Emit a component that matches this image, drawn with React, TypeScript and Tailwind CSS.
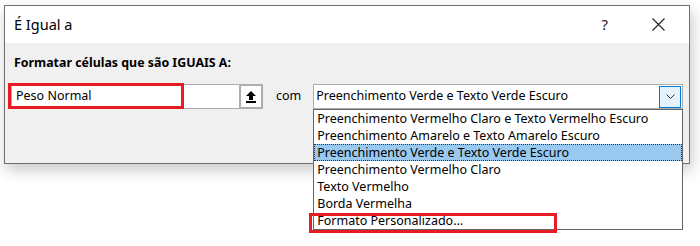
const items = [
  "Preenchimento Vermelho Claro e Texto Vermelho Escuro",
  "Preenchimento Amarelo e Texto Amarelo Escuro",
  "Preenchimento Verde e Texto Verde Escuro",
  "Preenchimento Vermelho Claro",
  "Texto Vermelho",
  "Borda Vermelha",
  "Formato Personalizado...",
];

const SELECTED = 2;

export default function App() {
  return (
    <div
      className="relative w-[700px] h-[246px] bg-white overflow-hidden text-black"
      style={{ fontFamily: '"Segoe UI", "Noto Sans", sans-serif' }}>
      {/* dialog */}
      <div className="ml-[4px] mt-[5px] w-[686px] h-[159px] border border-[#707070] bg-[#f0f0f0] flex flex-col shadow-[2px_6px_14px_rgba(0,0,0,0.22)]">
        {/* title bar */}
        <div className="h-[37px] bg-white flex items-center pl-[9px] pr-[24px] shrink-0">
          <span className="text-[14.5px] leading-none">É Igual a</span>
          <span className="ml-auto text-[15px] leading-none text-[#222]">?</span>
          <svg className="ml-[44px]" width="13" height="13" viewBox="0 0 13 13">
            <path d="M0.5 0.5 L12.5 12.5 M12.5 0.5 L0.5 12.5" stroke="#222" strokeWidth="1.1" fill="none" />
          </svg>
        </div>

        {/* body */}
        <div className="pt-[12px] pl-[9px]">
          <div className="text-[12.4px] font-bold leading-[16px]">Formatar células que são IGUAIS A:</div>

          <div className="mt-[13px] flex items-center">
            {/* reference input */}
            <div className="ml-[-3px] h-[25px] w-[252px] flex border border-[#adadad] bg-white">
              <div className="flex-1 flex items-center pl-[4px] text-[12.5px]">Peso Normal</div>
              <div className="w-[24px] h-[25px] -mt-px -mr-px border-2 border-[#adadad] bg-[#fdfdfd] flex items-center justify-center">
                <svg width="10" height="12" viewBox="0 0 10 12">
                  <path d="M5 0 L10 5 L7 5 L7 9 L3 9 L3 5 L0 5 Z" fill="#000" />
                  <rect x="0" y="10" width="10" height="2" fill="#000" />
                </svg>
              </div>
            </div>

            <span className="ml-[13px] text-[12.5px]">com</span>

            {/* combobox */}
            <div className="relative ml-[12px] h-[25px] w-[370px] border border-[#adadad] bg-white flex items-center">
              <span className="pl-[2px] text-[12.5px]">Preenchimento Verde e Texto Verde Escuro</span>
              <div className="ml-auto mr-px w-[22px] h-[22px] border border-[#0078d7] bg-[#e5f1fb] flex items-center justify-center">
                <svg width="9" height="5" viewBox="0 0 9 5">
                  <path d="M0.5 0.5 L4.5 4.5 L8.5 0.5" stroke="#333" strokeWidth="1" fill="none" />
                </svg>
              </div>

              {/* dropdown list */}
              <div className="absolute left-[-1px] top-[24px] w-[370px] border border-[#646464] bg-white">
                {items.map((it, i) => (
                  <div
                    key={it}
                    className={
                      i === SELECTED
                        ? "h-[17px] leading-[16px] pl-[2px] text-[12.5px] bg-[#99c9ef] border border-dotted border-[#333]"
                        : "h-[17px] leading-[18px] pl-[3px] text-[12.5px]"
                    }>
                    {it}
                  </div>
                ))}
              </div>
            </div>
          </div>
        </div>
      </div>

      {/* red highlight boxes */}
      <div className="absolute left-[8px] top-[83px] w-[176px] h-[26px] border-[3px] border-[#e81c24]" />
      <div className="absolute left-[309px] top-[213px] w-[248px] h-[20px] border-[3px] border-[#e81c24]" />
    </div>
  );
}
